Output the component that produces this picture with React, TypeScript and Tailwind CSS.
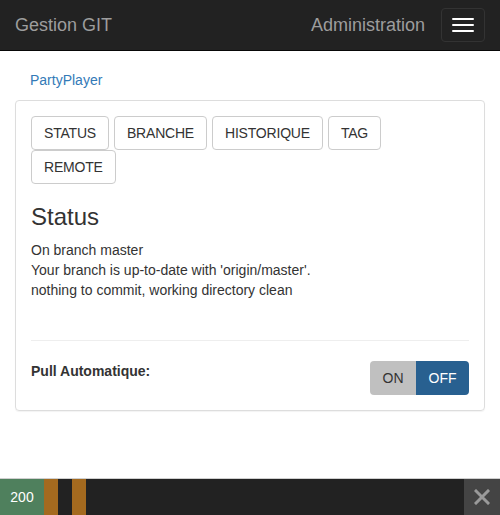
import { useState } from "react";

const tabs = ["STATUS", "BRANCHE", "HISTORIQUE", "TAG", "REMOTE"];

function Navbar() {
  return (
    <nav className="h-[51px] bg-[#222] border-b border-[#080808] flex items-center">
      <a className="pl-[15px] text-[18px] leading-[20px] text-[#9d9d9d]">Gestion GIT</a>
      <div className="ml-auto flex items-center">
        <span className="text-[18px] leading-[20px] text-[#9d9d9d] mr-[16px]">Administration</span>
        <button className="mr-[15px] w-[44px] h-[34px] border border-[#333] rounded-[4px] flex flex-col items-center justify-center gap-[4px]">
          <span className="block w-[22px] h-[2px] bg-white rounded-[1px]" />
          <span className="block w-[22px] h-[2px] bg-white rounded-[1px]" />
          <span className="block w-[22px] h-[2px] bg-white rounded-[1px]" />
        </button>
      </div>
    </nav>
  );
}

function PullToggle() {
  const [on, setOn] = useState(false);
  return (
    <div className="flex h-[34px] rounded-[4px] overflow-hidden text-[14px]">
      <button
        onClick={() => setOn(true)}
        className={on ? "w-[46px] bg-[#286090] text-white" : "w-[46px] bg-[#c0c0c0] text-[#333]"}
      >
        ON
      </button>
      <button
        onClick={() => setOn(false)}
        className={on ? "w-[53px] bg-[#c0c0c0] text-[#333]" : "w-[53px] bg-[#286090] text-white"}
      >
        OFF
      </button>
    </div>
  );
}

function DebugToolbar() {
  return (
    <div className="mt-auto h-[37px] border-t border-[#cfcfcf] bg-[#222] flex text-[14px]">
      <div className="w-[44px] bg-[#4f805d] text-white flex items-center justify-center">200</div>
      <div className="w-[14px] bg-[#a46a1f]" />
      <div className="w-[14px]" />
      <div className="w-[14px] bg-[#a46a1f]" />
      <button className="ml-auto w-[36px] bg-[#444] flex items-center justify-center">
        <svg width="16" height="16" viewBox="0 0 16 16">
          <path d="M2 2 L14 14 M14 2 L2 14" stroke="#9a9a9a" strokeWidth="3" strokeLinecap="square" />
        </svg>
      </button>
    </div>
  );
}

export default function App() {
  return (
    <div className="min-h-screen flex flex-col bg-white text-[#333] text-[14px] leading-[20px] font-['Liberation_Sans',Arial,sans-serif]">
      <Navbar />

      <div className="px-[15px]">
        <div className="pt-[19px] pb-[10px] pl-[15px]">
          <a className="text-[#337ab7]">PartyPlayer</a>
        </div>

        <div className="border border-[#ddd] rounded-[4px] p-[15px] shadow-[0_1px_1px_rgba(0,0,0,0.05)]">
          <div className="flex flex-wrap gap-x-[5px]">
            {tabs.map((t) => (
              <button
                key={t}
                className="h-[34px] px-[12px] border border-[#ccc] rounded-[4px] bg-white text-[#333] text-[14px] tracking-[-0.2px]"
              >
                {t}
              </button>
            ))}
          </div>

          <h3 className="mt-[20px] mb-[10px] text-[24px] leading-[26px] text-[#333]">Status</h3>
          <div>
            <p>On branch master</p>
            <p>Your branch is up-to-date with 'origin/master'.</p>
            <p>nothing to commit, working directory clean</p>
          </div>

          <hr className="mt-[40px] mb-[20px] border-t border-[#eee]" />

          <div className="flex items-start justify-between">
            <label className="font-bold">Pull Automatique:</label>
            <PullToggle />
          </div>
        </div>
      </div>

      <DebugToolbar />
    </div>
  );
}
